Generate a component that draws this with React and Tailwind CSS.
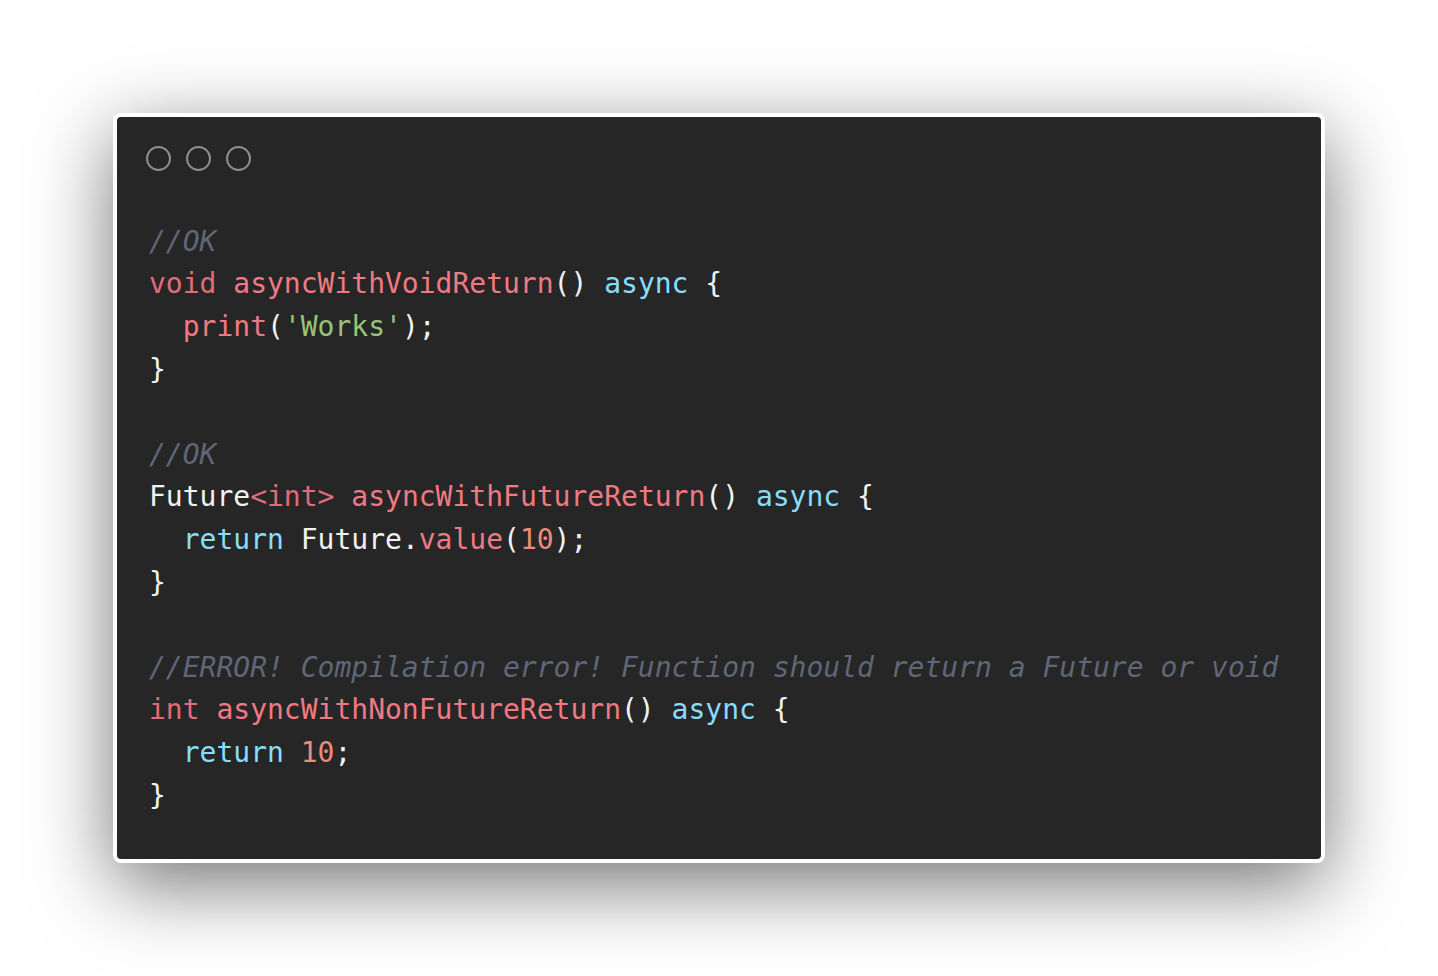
import React from 'react';

// colours picked from the snippet theme
const C = {
  comment: 'text-[#5f6677] italic',
  kw: 'text-[#e06c7a]',
  fn: 'text-[#f07a84]',
  ctl: 'text-[#89ddff]',
  str: 'text-[#98c379]',
  num: 'text-[#ee8a78]',
  plain: 'text-[#f2f2f2]',
};

const lines = [
  [['//OK', C.comment]],
  [['void', C.kw], [' '], ['asyncWithVoidReturn', C.fn], ['() '], ['async', C.ctl], [' {']],
  [['  '], ['print', C.fn], ['('], ["'Works'", C.str], [');']],
  [['}']],
  [],
  [['//OK', C.comment]],
  [['Future'], ['<int>', C.kw], [' '], ['asyncWithFutureReturn', C.fn], ['() '], ['async', C.ctl], [' {']],
  [['  '], ['return', C.ctl], [' Future.'], ['value', C.fn], ['('], ['10', C.num], [');']],
  [['}']],
  [],
  [['//ERROR! Compilation error! Function should return a Future or void', C.comment]],
  [['int', C.kw], [' '], ['asyncWithNonFutureReturn', C.fn], ['() '], ['async', C.ctl], [' {']],
  [['  '], ['return', C.ctl], [' '], ['10', C.num], [';']],
  [['}']],
];

export default function App() {
  return (
    <div className="h-[976px] w-full bg-white flex items-center justify-center">
      <div className="w-[1212px] border-4 border-white rounded-[8px] bg-[#262626] shadow-[0_22px_80px_rgba(0,0,0,0.55)] overflow-hidden">
        <div className="flex gap-[15px] pt-[29px] pl-[29px]">
          <span className="w-[25px] h-[25px] rounded-full border-2 border-[#8e8e8e]"></span>
          <span className="w-[25px] h-[25px] rounded-full border-2 border-[#8e8e8e]"></span>
          <span className="w-[25px] h-[25px] rounded-full border-2 border-[#8e8e8e]"></span>
        </div>
        <pre className="mt-[50px] pl-[32px] pb-[42px] font-['DejaVu_Sans_Mono',monospace] text-[28px] leading-[42.6px] text-[#f2f2f2]">
          {lines.map((line, i) => (
            <div key={i} className="h-[42.6px]">
              {line.map(([t, cls], j) => (
                <span key={j} className={cls || C.plain}>{t}</span>
              ))}
            </div>
          ))}
        </pre>
      </div>
    </div>
  );
}
